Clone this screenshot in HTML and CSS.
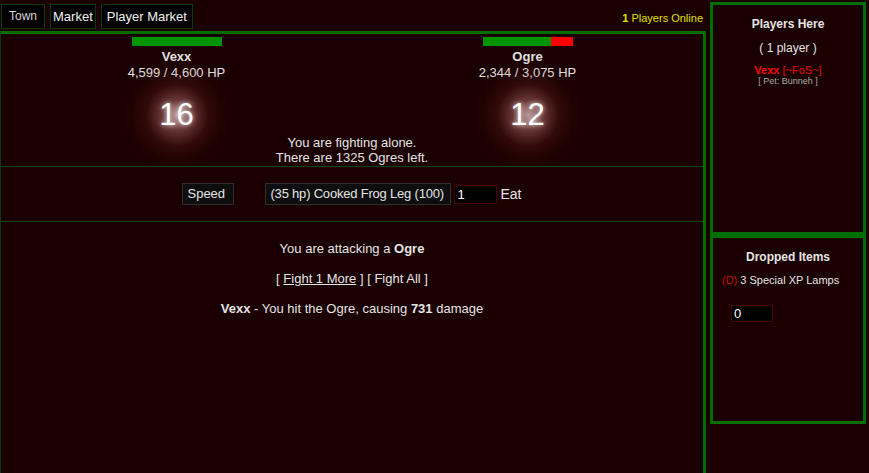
FILE: index.html
```html
<!DOCTYPE html>
<html lang="en">
<head>
    <meta charset="UTF-8">
    <meta name="viewport" content="width=device-width, initial-scale=1.0">
    <title>Battle</title>
    <link rel="stylesheet" href="styles.css">
</head>
<body>
    <div class="page">
        <div class="main-col">
            <div class="topbar">
                <div class="nav">
                    <a class="nav-btn town" href="#">Town</a>
                    <a class="nav-btn tight" href="#">Market</a>
                    <a class="nav-btn" href="#">Player Market</a>
                </div>
                <div class="online"><b>1</b> Players Online</div>
            </div>

            <div class="battle">
                <div class="section fight">
                    <div class="fighters">
                        <div class="fighter">
                            <div class="hpbar"><div class="hp" style="width: 100%"></div></div>
                            <div class="name">Vexx</div>
                            <div class="hptext">4,599 / 4,600 HP</div>
                            <div class="level">16</div>
                        </div>
                        <div class="fighter">
                            <div class="hpbar"><div class="hp" style="width: 76%"></div></div>
                            <div class="name">Ogre</div>
                            <div class="hptext">2,344 / 3,075 HP</div>
                            <div class="level">12</div>
                        </div>
                    </div>
                    <div class="status">You are fighting alone.<br>There are 1325 Ogres left.</div>
                </div>

                <div class="section actions">
                    <span class="pick speed">Speed</span>
                    <span class="pick food">(35 hp) Cooked Frog Leg (100)</span>
                    <input class="qty" type="text" value="1">
                    <span class="eat">Eat</span>
                </div>

                <div class="section log">
                    <p>You are attacking a <b>Ogre</b></p>
                    <p><a class="fight-link" href="#">[ <u>Fight 1 More</u> ]</a> <a class="fight-link" href="#">[ Fight All ]</a></p>
                    <p><b>Vexx</b> - You hit the Ogre, causing <b>731</b> damage</p>
                </div>
            </div>
        </div>

        <div class="side">
            <div class="box players">
                <div class="box-title">Players Here</div>
                <div class="count">( 1 player )</div>
                <div class="player"><b>Vexx</b> [~FoS~]</div>
                <div class="pet">[ Pet: Bunneh ]</div>
            </div>
            <div class="box drops">
                <div class="box-title">Dropped Items</div>
                <div class="drop"><span class="tag">(D)</span> 3 Special XP Lamps</div>
                <input class="drop-qty" type="text" value="0">
            </div>
        </div>
    </div>
</body>
</html>
```

FILE: styles.css
```css
body {
    margin: 0;
    height: 100vh;
    overflow: hidden;
    background-color: #1a0000;
    color: #e4e4e4;
    font-family: "Liberation Sans", Arial, sans-serif;
    font-size: 13px;
}
.page {
    display: flex;
    height: 100%;
}
.main-col {
    width: 706px;
    display: flex;
    flex-direction: column;
}
.topbar {
    height: 31px;
    display: flex;
    justify-content: space-between;
    box-sizing: border-box;
    padding: 4px 3px 2px 1px;
}
.nav {
    display: flex;
    gap: 5px;
    height: 25px;
}
.nav-btn {
    display: block;
    background: #000;
    border: 1px solid #0b3a0b;
    color: #f0f0f0;
    text-decoration: none;
    line-height: 23px;
    padding: 0 5px;
}
.nav-btn.tight {
    padding: 0 2px;
}
.nav-btn.town {
    font-size: 12px;
    color: #d4d4d4;
    padding: 0 7px;
}
.online {
    align-self: flex-end;
    margin-bottom: 4px;
    color: #e0e000;
    font-size: 11px;
    line-height: 13px;
}
.battle {
    flex: 1;
    border-top: 3px solid #006f00;
    border-right: 3px solid #006f00;
    border-left: 1px solid #0a3a0a;
}
.section {
    border-bottom: 1px solid #0c440c;
}
.fight {
    padding: 3px 0 1px;
}
.fighters {
    display: flex;
}
.fighter {
    flex: 1;
    text-align: center;
}
.hpbar {
    width: 90px;
    height: 9px;
    margin: 0 auto 3px;
    background: #ff0000;
}
.hp {
    height: 100%;
    background: #009400;
}
.name {
    font-weight: bold;
    line-height: 16px;
}
.hptext {
    line-height: 16px;
}
.level {
    position: relative;
    isolation: isolate;
    margin-top: 13px;
    height: 42px;
    line-height: 42px;
    font-size: 31px;
    color: #fff;
    text-shadow: 0 0 5px rgba(255, 255, 255, 0.8);
}
/* glow spot behind the level number */
.level::before {
    content: "";
    position: absolute;
    z-index: -1;
    left: 50%;
    top: 50%;
    width: 124px;
    height: 124px;
    margin: -62px 0 0 -62px;
    border-radius: 50%;
    background: radial-gradient(circle closest-side, rgba(255, 215, 215, 0.7) 0%, rgba(215, 130, 130, 0.4) 25%, rgba(150, 50, 50, 0.2) 50%, rgba(90, 15, 15, 0.08) 75%, rgba(26, 0, 0, 0) 100%);
}
.status {
    margin-top: -1px;
    text-align: center;
    line-height: 15px;
}
.actions {
    height: 54px;
    display: flex;
    align-items: center;
    justify-content: center;
}
.pick {
    box-sizing: border-box;
    height: 22px;
    line-height: 20px;
    padding: 0 4px;
    white-space: nowrap;
    overflow: hidden;
    background: #0e0e0e;
    border: 1px solid #2e2e2e;
}
.speed {
    width: 52px;
    margin-right: 31px;
}
.food {
    width: 186px;
    letter-spacing: -0.2px;
}
.qty {
    box-sizing: border-box;
    width: 43px;
    height: 19px;
    margin: 0 3px;
    padding: 0 2px;
    background: #000;
    border: 1px solid #4a0000;
    color: #fff;
    font-family: inherit;
    font-size: 13px;
}
.eat {
    font-size: 14px;
}
.log {
    border-bottom: none;
    padding-top: 19px;
    text-align: center;
}
.log p {
    margin: 0 0 15px;
    line-height: 15px;
}
.fight-link {
    color: #e4e4e4;
    text-decoration: none;
}
.side {
    width: 156px;
    margin: 2px 0 0 4px;
}
.box {
    box-sizing: border-box;
    border: 3px solid #006f00;
    text-align: center;
}
.players {
    height: 233px;
    padding-top: 12px;
}
.drops {
    height: 189px;
    padding: 12px 0 0 9px;
    text-align: left;
}
.box-title {
    font-weight: bold;
    font-size: 12px;
    line-height: 14px;
}
.drops .box-title {
    text-align: center;
    margin-left: -9px;
}
.count {
    margin-top: 10px;
    font-size: 12px;
    line-height: 14px;
}
.player {
    margin-top: 10px;
    font-size: 11px;
    line-height: 11px;
    color: #ee0000;
}
.player b {
    color: #ff0000;
}
.pet {
    font-size: 9px;
    line-height: 11px;
    color: #aaa;
}
.drop {
    margin-top: 10px;
    font-size: 11px;
    line-height: 13px;
}
.tag {
    color: #cc0000;
}
.drop-qty {
    display: block;
    box-sizing: border-box;
    width: 42px;
    height: 17px;
    margin: 18px 0 0 9px;
    padding: 0 2px;
    background: #000;
    border: 1px solid #4a0000;
    color: #fff;
    font-family: inherit;
    font-size: 13px;
}
```
